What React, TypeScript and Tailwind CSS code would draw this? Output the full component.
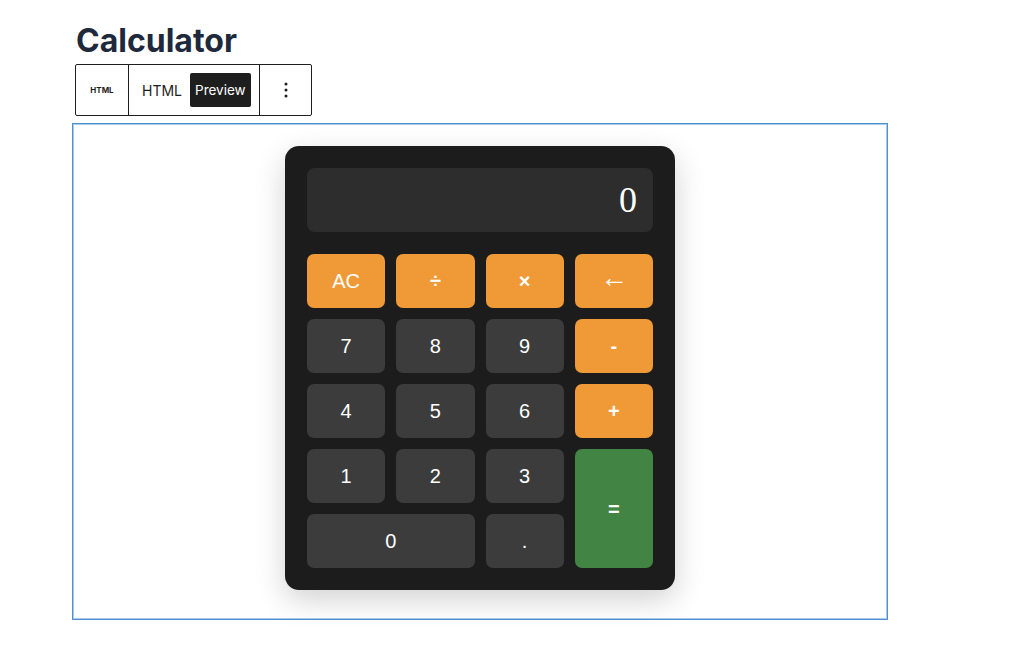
import { useState } from "react";

type Key = {
  label: string;
  kind: "op" | "num" | "eq";
  className?: string;
};

const keys: Array<Key> = [
  { label: "AC", kind: "op" },
  { label: "÷", kind: "op", className: "font-bold text-[19px]" },
  { label: "×", kind: "op", className: "font-bold text-[19px]" },
  { label: "←", kind: "op", className: "text-[28px] pb-[6px]" },
  { label: "7", kind: "num" },
  { label: "8", kind: "num" },
  { label: "9", kind: "num" },
  { label: "-", kind: "op", className: "font-bold" },
  { label: "4", kind: "num" },
  { label: "5", kind: "num" },
  { label: "6", kind: "num" },
  { label: "+", kind: "op", className: "font-bold" },
  { label: "1", kind: "num" },
  { label: "2", kind: "num" },
  { label: "3", kind: "num" },
  { label: "=", kind: "eq", className: "row-span-2 font-bold" },
  { label: "0", kind: "num", className: "col-span-2" },
  { label: ".", kind: "num" },
];

const kindStyles = {
  op: "bg-[#f09a37]",
  num: "bg-[#3c3c3c]",
  eq: "bg-[#428443]",
};

function CalcKey({ k, onPress }: { k: Key; onPress: (label: string) => void }) {
  return (
    <button
      onClick={() => onPress(k.label)}
      className={`flex items-center justify-center rounded-[7px] text-[20px] text-white ${kindStyles[k.kind]} ${k.className ?? ""}`}
    >
      {k.label}
    </button>
  );
}

export default function App() {
  const [display, setDisplay] = useState<string>("0");

  // just enough logic to make the keys do something
  const onPress = (label: string): void => {
    if (label === "AC") return setDisplay("0");
    if (label === "←") return setDisplay(display.length > 1 ? display.slice(0, -1) : "0");
    if (label === "=") {
      try {
        const expr = display.replace(/×/g, "*").replace(/÷/g, "/");
        setDisplay(String(Function(`return (${expr})`)()));
      } catch {
        setDisplay("Error");
      }
      return;
    }
    setDisplay(display === "0" && label !== "." ? label : display + label);
  };

  return (
    <main className="min-h-[670px] bg-white pl-[72px] pt-[22px] font-['Inter',sans-serif]">
      <h1 className="pl-[4px] text-[32px] font-bold leading-[38px] text-[#1e293b]">Calculator</h1>

      <div className="ml-[3px] mt-[4px] flex h-[52px] w-[237px] rounded-[2px] border border-[#1e1e1e] text-[#1e1e1e]">
        <div className="flex w-[53px] items-center justify-center border-r border-[#1e1e1e] text-[8px] font-bold">HTML</div>
        <div className="flex w-[131px] items-center border-r border-[#1e1e1e] pl-[13px] text-[14px]">
          <span>HTML</span>
          <span className="ml-[8px] flex h-[34px] items-center rounded-[2px] bg-[#1e1e1e] px-[5px] text-[13.5px] text-white">Preview</span>
        </div>
        <div className="flex flex-1 items-center justify-center">
          <svg width="4" height="16" viewBox="0 0 4 16" fill="#1e1e1e">
            <circle cx="2" cy="2" r="1.5" />
            <circle cx="2" cy="8" r="1.5" />
            <circle cx="2" cy="14" r="1.5" />
          </svg>
        </div>
      </div>

      <div className="mt-[7px] flex w-[816px] justify-center border border-[#4d8fcf] pb-[29px] pt-[22px] shadow-[inset_0_0_0_1px_#a9cbea]">
        <div className="w-[390px] rounded-[14px] bg-[#1c1c1c] p-[22px] shadow-[0_10px_30px_rgba(0,0,0,0.18)]">
          <div className="flex h-[64px] items-center justify-end rounded-[8px] bg-[#2d2d2d] pr-[16px] font-['Liberation_Serif',serif] text-[36px] text-white">
            {display}
          </div>
          <div className="mt-[22px] grid grid-cols-4 auto-rows-[54px] gap-[11px] font-['Liberation_Sans',Arial,sans-serif]">
            {keys.map((k) => (
              <CalcKey key={k.label} k={k} onPress={onPress} />
            ))}
          </div>
        </div>
      </div>
    </main>
  );
}
